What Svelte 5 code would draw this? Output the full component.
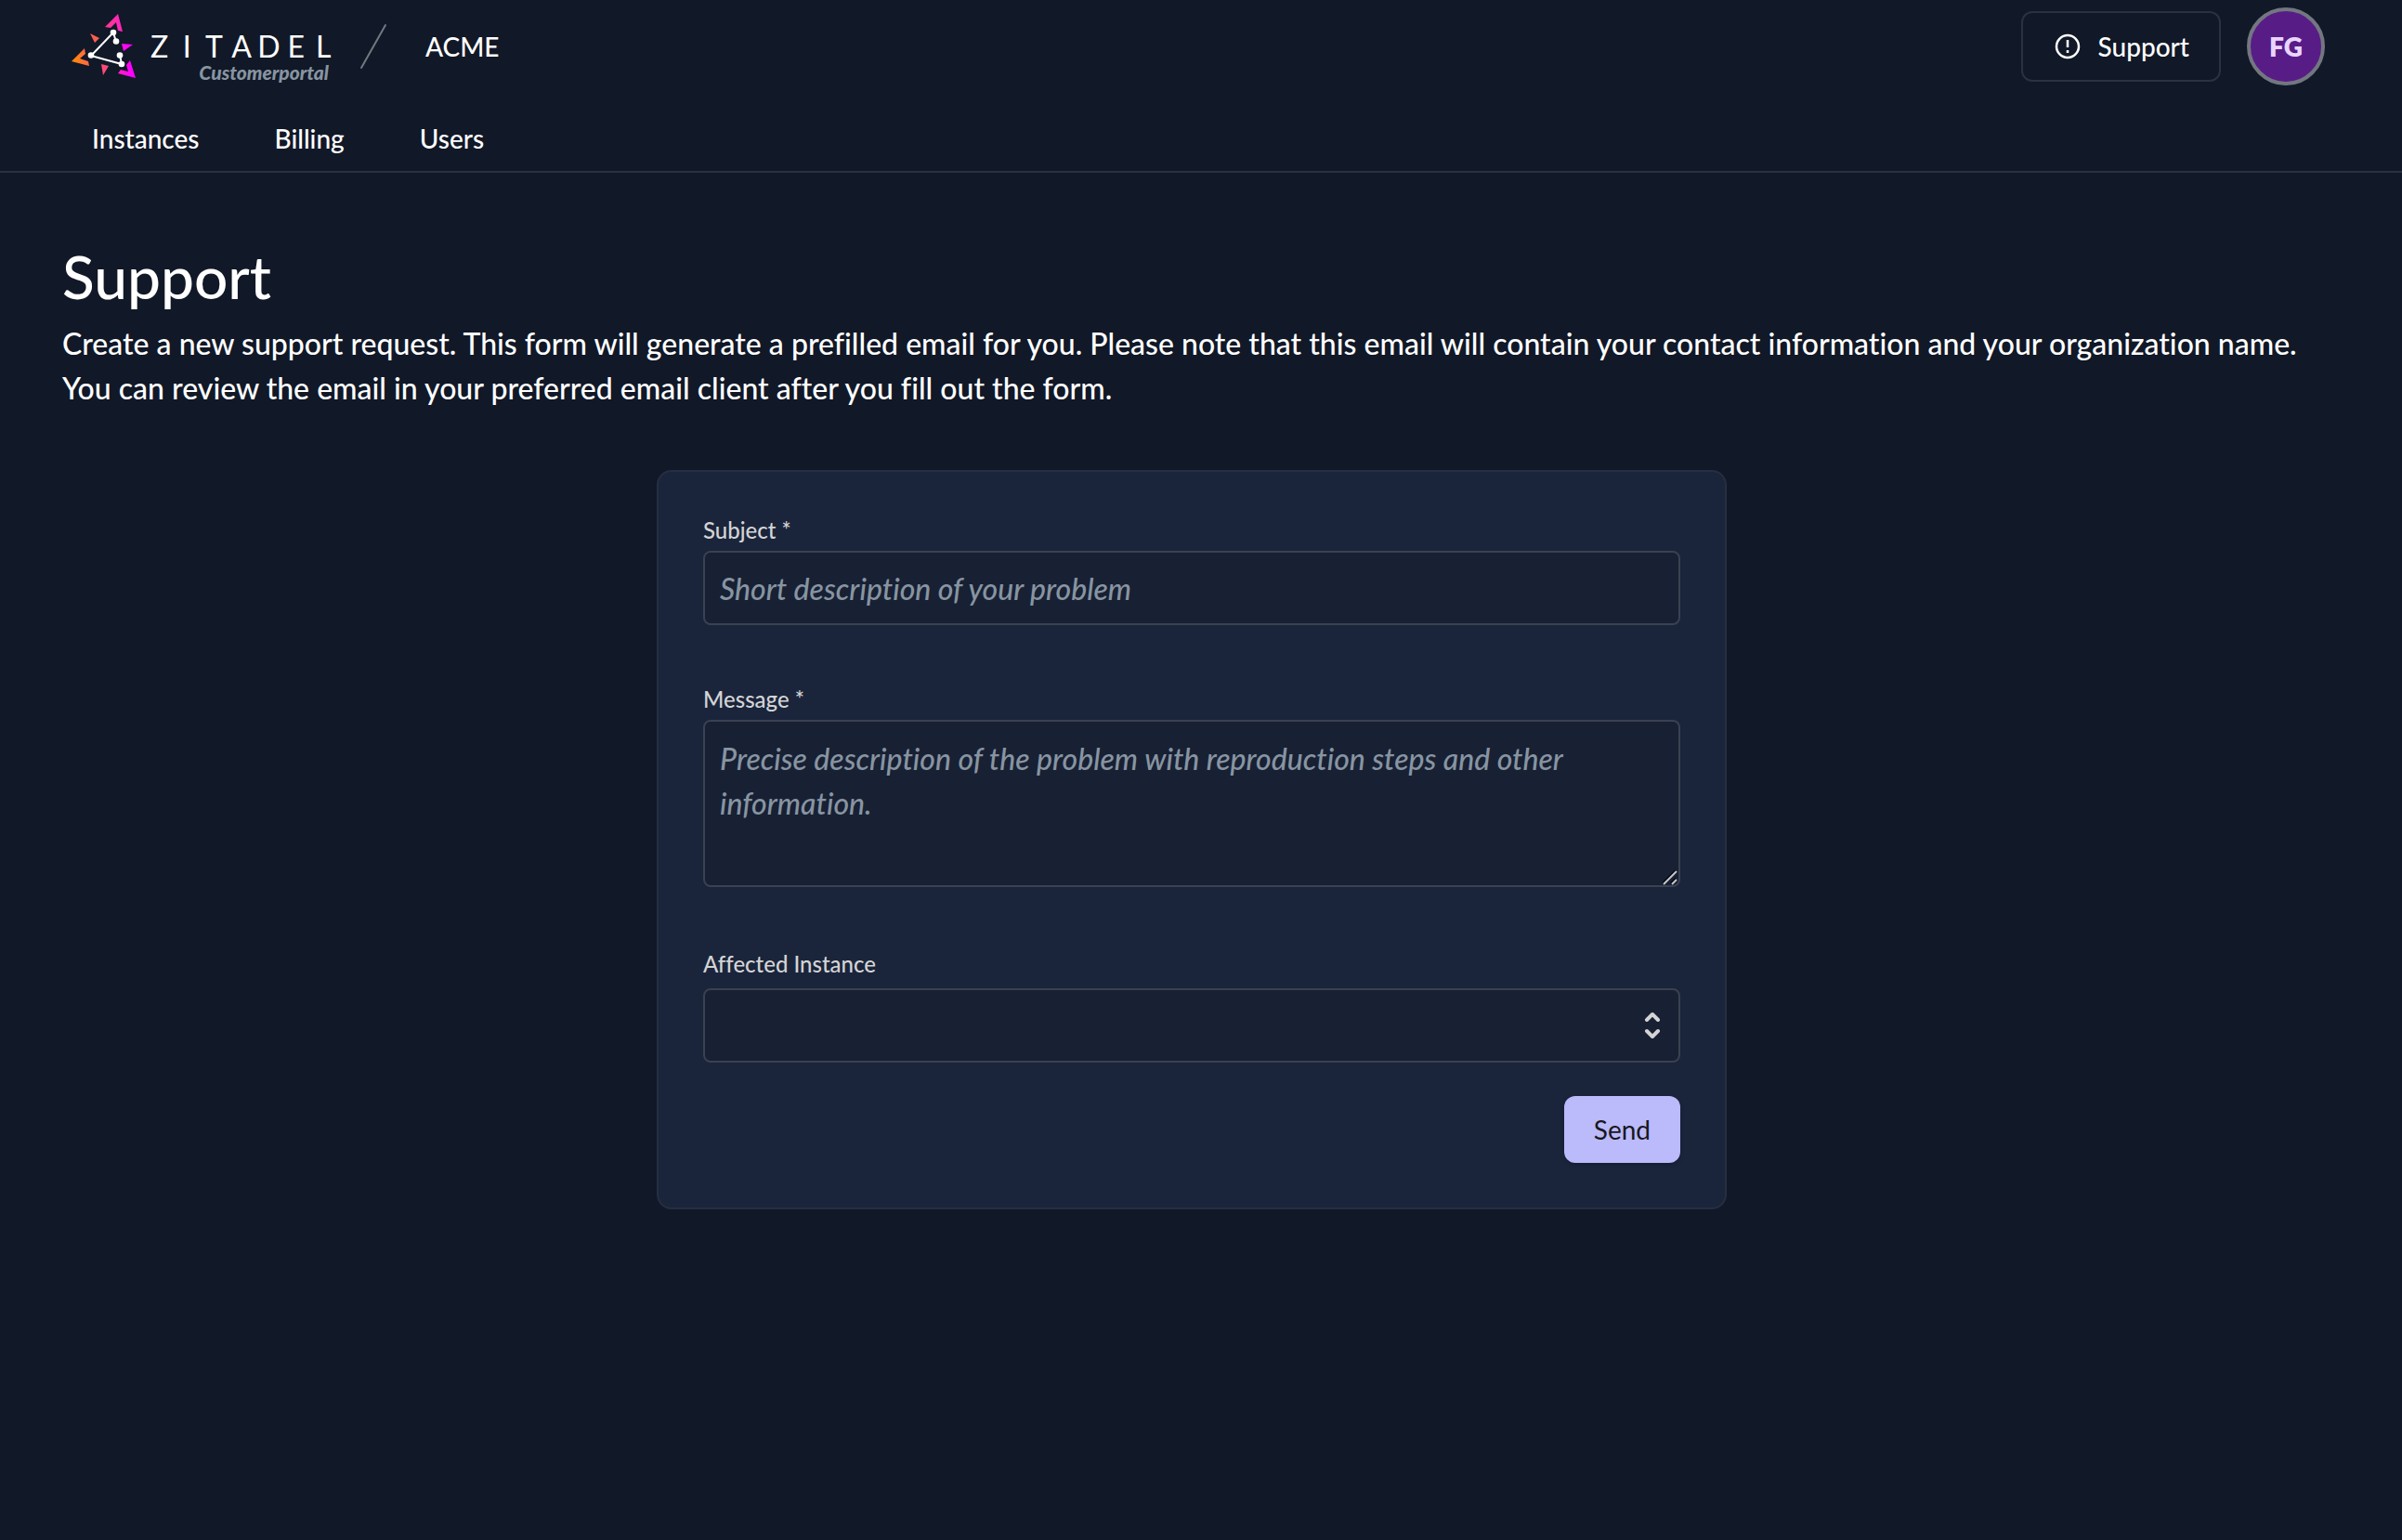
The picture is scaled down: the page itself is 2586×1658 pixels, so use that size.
<script lang="ts">
  const wordmark = "ZITADEL".split("");
  const links = ["Instances", "Billing", "Users"];

  let subject = $state("");
  let message = $state("");
  let instance = $state("");

  function send(event: SubmitEvent) {
    event.preventDefault();
    const body = instance ? `${message}\n\n${instance}` : message;
    window.location.href = `mailto:?subject=${encodeURIComponent(subject)}&body=${encodeURIComponent(body)}`;
  }
</script>

<header>
  <div class="topbar">
    <a class="logo" href="/">
      <svg class="mark" viewBox="0 0 70 70" aria-hidden="true">
        <defs>
          <linearGradient id="brand" gradientUnits="userSpaceOnUse" x1="0" y1="51" x2="62" y2="42">
            <stop offset="0" stop-color="#ff8f00" />
            <stop offset="1" stop-color="#fe00ff" />
          </linearGradient>
          <linearGradient id="tip" gradientUnits="userSpaceOnUse" x1="36" y1="14" x2="55" y2="10">
            <stop offset="0" stop-color="#fd3b86" />
            <stop offset="1" stop-color="#fe23c4" />
          </linearGradient>
        </defs>
        <path d="M50 0 36 14 42 15 48 9 50 18 55 19Z" fill="url(#tip)" />
        <g fill="url(#brand)">
          <path d="M0 51 14 37 15 43 9 48 18 51 19 56Z" />
          <path d="M69 69 63 50 59 55 61 62 53 60 50 64Z" />
          <path d="M54 32 66 33 56 40Z" />
        </g>
        <path d="M20 21 30 26 25 31Z" fill="#fe5e50" />
        <path d="M32 54 40 56 34 66Z" fill="#fe4a78" />
        <path d="M48 30 45 20 21 45 54 54 52 44" fill="none" stroke="#fff" stroke-width="2" />
        <g fill="#fff">
          <circle cx="45" cy="20" r="3.3" />
          <circle cx="48" cy="29.5" r="3.3" />
          <circle cx="21" cy="44.5" r="3.3" />
          <circle cx="54" cy="54" r="3.3" />
          <circle cx="52" cy="44.5" r="3.3" />
        </g>
      </svg>
      <span class="brand">
        <span class="wordmark">
          {#each wordmark as letter}<span>{letter}</span>{/each}
        </span>
        <span class="product">Customerportal</span>
      </span>
    </a>
    <svg class="slash" viewBox="0 0 30 50" aria-hidden="true">
      <path d="M2 48 28 2" />
    </svg>
    <a class="org" href="/org">ACME</a>
    <a class="support" href="/support">
      <svg viewBox="0 0 28 28" aria-hidden="true">
        <circle cx="14" cy="14" r="12" />
        <path d="M14 7v8M14 18v3" />
      </svg>
      Support
    </a>
    <button class="avatar" type="button">FG</button>
  </div>
  <nav>
    {#each links as link}
      <a href="/{link.toLowerCase()}">{link}</a>
    {/each}
  </nav>
</header>

<main>
  <h1>Support</h1>
  <p>
    Create a new support request. This form will generate a prefilled email for you. Please note that this email will
    contain your contact information and your organization name.<br />
    You can review the email in your preferred email client after you fill out the form.
  </p>

  <form onsubmit={send}>
    <div class="field">
      <label for="subject">Subject *</label>
      <input id="subject" type="text" placeholder="Short description of your problem" required bind:value={subject} />
    </div>
    <div class="field">
      <label for="message">Message *</label>
      <div class="control">
        <textarea
          id="message"
          placeholder="Precise description of the problem with reproduction steps and other information."
          required
          bind:value={message}
        ></textarea>
        <svg class="grip" viewBox="0 0 16 16" aria-hidden="true">
          <path d="M0 14 14 0M9 14l5-5" stroke="#05080f" />
          <path d="M1 15 15 1M10 15l5-5" stroke="#c4c5c8" />
        </svg>
      </div>
    </div>
    <div class="field">
      <label for="instance">Affected Instance</label>
      <div class="control">
        <select id="instance" bind:value={instance}>
          <option value=""></option>
        </select>
        <svg class="caret" viewBox="0 0 20 32" aria-hidden="true">
          <path d="M4 10 10 4 16 10M4 22 10 28 16 22" />
        </svg>
      </div>
    </div>
    <button class="send" type="submit">Send</button>
  </form>
</main>

<style>
  :global(body) {
    background: #111827;
    color: #fff;
    font-family: Lato, "Open Sans", sans-serif;
    font-size: 32px;
    font-variant-ligatures: none;
    font-weight: 500;
    line-height: 48px;
  }
  a {
    color: inherit;
    text-decoration: none;
  }
  header {
    font-size: 28px;
    line-height: 40px;
    border-bottom: 2px solid #2b3140;
  }
  .topbar {
    display: flex;
    align-items: center;
    height: 100px;
    padding: 0 83px 0 77px;
  }
  .logo {
    display: flex;
    align-items: center;
  }
  .mark {
    width: 70px;
    height: 70px;
  }
  .brand {
    display: flex;
    flex-direction: column;
    width: 206px;
    margin-left: 10px;
    padding-top: 24px;
  }
  .wordmark {
    display: grid;
    grid-template-columns: repeat(7, 1fr);
    font-size: 32px;
    font-weight: 400;
    line-height: 32px;
    text-align: center;
  }
  .product {
    align-self: flex-end;
    margin-right: 9px;
    color: #8795a1;
    font-size: 21px;
    font-weight: 900;
    font-style: italic;
    line-height: 24px;
  }
  .slash {
    width: 30px;
    height: 50px;
    margin: 0 41px 0 24px;
    fill: none;
    stroke: #737780;
    stroke-width: 2;
    stroke-linecap: round;
  }
  .support {
    display: flex;
    align-items: center;
    gap: 19px;
    margin-left: auto;
    padding: 16px 32px 16px 34px;
    border: 2px solid #2b3140;
    border-radius: 12px;
  }
  .support svg {
    width: 28px;
    height: 28px;
    fill: none;
    stroke: #fff;
    stroke-width: 2.5;
  }
  .avatar {
    width: 84px;
    height: 84px;
    margin-left: 28px;
    padding: 0;
    border: 4px solid #737780;
    border-radius: 50%;
    background: #581c87;
    color: #e9d5ff;
    font: inherit;
    font-weight: 800;
  }
  nav {
    display: flex;
    gap: 33px;
    padding: 29px 75px 15px;
  }
  nav a {
    padding: 0 24px;
  }
  main {
    padding: 76px 87px 80px 67px;
  }
  h1 {
    margin: 0;
    font-size: 64px;
    font-weight: 500;
    line-height: 72px;
  }
  p {
    margin: 12px 0 0;
  }
  form {
    display: flex;
    flex-direction: column;
    box-sizing: border-box;
    max-width: 1152px;
    margin: 64px auto 0;
    padding: 48px;
    border: 2px solid #262f41;
    border-radius: 16px;
    background: #1a253c;
  }
  .field {
    display: flex;
    flex-direction: column;
    gap: 7px;
    margin-bottom: 65px;
  }
  .field:has(select) {
    gap: 11px;
    margin: 3px 0 36px;
  }
  label {
    color: #d4d4d4;
    font-size: 24px;
    line-height: 30px;
  }
  input,
  textarea,
  select {
    box-sizing: border-box;
    width: 100%;
    height: 80px;
    padding: 0 16px;
    border: 2px solid #3a4150;
    border-radius: 8px;
    background: #182034;
    color: #fff;
    font: inherit;
    font-variant-ligatures: none;
  }
  textarea {
    display: block;
    height: 180px;
    padding-top: 16px;
    resize: vertical;
  }
  textarea::-webkit-resizer {
    background: transparent;
  }
  ::placeholder {
    color: #8795a1;
    font-style: italic;
  }
  .control {
    display: grid;
    align-items: center;
  }
  .control > * {
    grid-area: 1 / 1;
  }
  .control svg {
    justify-self: end;
    fill: none;
    pointer-events: none;
  }
  .grip {
    align-self: end;
    width: 16px;
    height: 16px;
    margin: 0 3px 2px 0;
    stroke-width: 2;
  }
  select {
    appearance: none;
  }
  .caret {
    width: 20px;
    height: 32px;
    margin-right: 20px;
    stroke: #d4d4d4;
    stroke-width: 4;
    stroke-linecap: round;
    stroke-linejoin: round;
  }
  .send {
    align-self: flex-end;
    height: 72px;
    padding: 0 32px;
    border: 0;
    border-radius: 12px;
    background: #bbbafa;
    color: #17181c;
    font: inherit;
    font-size: 28px;
    font-weight: 400;
    box-shadow: 0 2px 4px #0003;
  }
</style>
